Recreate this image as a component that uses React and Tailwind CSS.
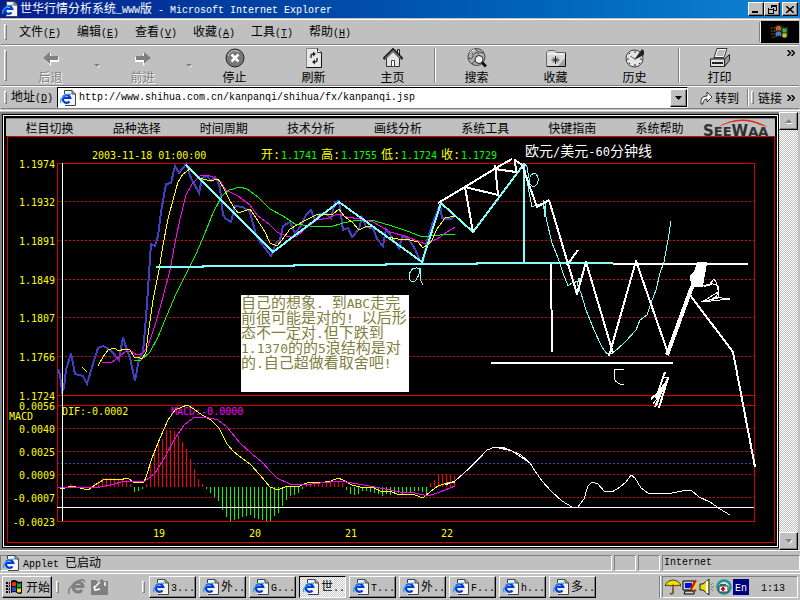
import React, { useState } from 'react';

const raised = 'border border-t-white border-l-white border-b-black border-r-black shadow-[inset_-1px_-1px_0_#808080]';

const menus = [
  ['文件', 'F'],
  ['编辑', 'E'],
  ['查看', 'V'],
  ['收藏', 'A'],
  ['工具', 'T'],
  ['帮助', 'H'],
];

const appletMenus = ['栏目切换', '品种选择', '时间周期', '技术分析', '画线分析', '系统工具', '快键指南', '系统帮助'];

const tasks = ['3...', '外..', 'G...', '世..', 'T...', '外..', 'F...', 'h...', '多..'];

const priceLabels = [
  ['1.1974', 163],
  ['1.1932', 201],
  ['1.1891', 240],
  ['1.1849', 279],
  ['1.1807', 317],
  ['1.1766', 356],
  ['1.1724', 395],
  ['0.0056', 405],
  ['0.0040', 428],
  ['0.0025', 451],
  ['0.0009', 474],
  ['-0.0007', 497],
  ['-0.0023', 521],
];

const quotes = [
  ['开:', '1.1741', 261],
  ['高:', '1.1755', 321],
  ['低:', '1.1724', 381],
  ['收:', '1.1729', 441],
];

const price =
  '58,369 60,375 62,391 64,388 66,370 71,353 75,374 79,375 83,376 87,384 92,367 98,348 103,346 107,348 112,352 119,360 123,337 126,347 130,358 135,381 139,359 143,352 146,318 149,274 151,244 155,246 158,236 161,212 166,184 171,183 175,166 179,173 186,164 191,178 199,193 202,178 207,176 211,181 215,177 218,182 220,188 223,215 226,219 231,222 235,206 243,207 250,212 256,235 261,243 265,248 271,256 276,243 280,240 283,226 290,222 295,233 301,226 306,215 311,210 315,220 320,214 326,214 331,218 335,202 339,201 343,230 348,228 352,237 359,229 362,217 366,227 373,228 377,239 383,246 386,229 392,237 399,248 402,237 408,238 415,249 420,261 423,262 427,241 433,222 440,205 442,218 447,219 451,219 455,215';
const maFast =
  '98,366 103,357 108,350 114,348 119,351 124,349 130,350 134,357 138,357 142,359 146,352 148,335 153,300 159,270 163,245 168,219 173,200 178,182 183,174 190,169 200,178 210,181 218,179 223,187 228,197 233,206 238,213 250,209 256,218 265,232 270,243 277,246 282,240 290,229 297,225 306,220 318,214 327,214 332,215 339,209 345,217 352,222 359,230 365,227 372,226 380,232 387,237 398,239 410,240 418,242 423,248 431,242 437,229 445,218 455,216';
const maMid =
  '102,363 112,362 119,357 126,351 131,351 137,355 143,353 148,346 156,322 163,297 170,270 175,243 180,219 186,195 192,184 200,176 208,175 215,178 220,181 226,190 238,196 250,205 257,215 270,225 277,232 286,236 297,236 305,229 317,220 329,218 337,214 347,217 360,219 373,222 380,226 390,232 405,236 415,240 425,244 437,239 447,232 455,227';
const maSlow =
  '134,361 141,360 150,352 158,337 167,315 176,294 188,270 196,254 205,233 213,213 222,196 229,190 240,187 247,189 258,197 270,209 283,216 295,224 310,226 330,227 343,223 358,220 375,221 392,226 410,232 422,237 440,235 455,234';
const dif =
  '60,489 65,488 72,486 80,488 88,490 95,485 103,480 112,479 119,480 128,478 134,483 144,482 146,477 152,458 160,438 168,420 175,410 187,405 194,409 202,415 211,420 219,428 227,444 234,452 250,464 260,475 270,487 278,490 287,486 300,486 309,482 325,482 331,481 338,478 343,480 352,485 360,487 372,487 382,492 390,491 399,495 407,494 415,495 423,498 430,492 438,486 447,483 455,482';
const dea =
  '58,488 80,487 95,488 110,485 125,481 145,481 155,473 165,457 174,440 184,425 193,418 205,417 218,420 227,427 240,443 252,454 262,462 270,471 277,478 290,484 305,485 320,483 340,481 358,484 375,487 400,492 415,493 428,496 440,492 455,486';

// one bar every 4 units starting at x = 70, positive is above the zero line
const bars = [
  3, 1, 1, 0, 0, 1, 4, 6, 9, 9, 9, 9, 8, 7, 7, 3, -5, -4, -2, 3, 26, 37, 43, 48, 57, 57, 56, 51, 45, 38, 28, 18, 8, 3,
  -2, -6, -10, -14, -23, -30, -34, -33, -32, -30, -29, -28, -31, -32, -33, -34, -34, -29, -26, -19, -13, -9, -8, -6, -2,
  2, 4, 4, 4, 3, 5, 5, 4, 5, 4, -3, -7, -8, -7, -4, -4, -5, -6, -7, -9, -7, -8, -6, -6, -8, -6, -5, -4, -4, -5, -8, 4,
  7, 13, 13, 13, 12, 11,
];

const forecast =
  '445,485 455,481 463,474 475,463 487,450 495,447 502,447 512,451 521,455 530,463 535,471 542,481 552,492 562,501 572,507 578,507 584,499 588,486 592,482 598,484 604,491 612,492 620,487 626,482 631,475 635,478 641,488 648,493 672,493 682,491 691,490 699,497 710,502 720,509 730,515';

const noteLines = [
  [['自己的想象', 0], ['. ', 1], ['到', 0], ['ABC', 1], ['走完', 0]],
  [['前很可能是对的', 0], ['! ', 1], ['以后形', 0]],
  [['态不一定对', 0], ['.', 1], ['但下跌到', 0]],
  [['1.1370', 1], ['的的', 0], ['5', 1], ['浪结构是对', 0]],
  [['的', 0], ['.', 1], ['自己超做看取舍吧', 0], ['!', 1]],
];

const En = ({ children }) => <span className="font-['Liberation_Mono',monospace] text-[10px]">{children}</span>;

const Grip = () => <span className="w-[3px] self-stretch my-1 border border-t-white border-l-white border-b-[#808080] border-r-[#808080]" />;

const Divider = () => <span className="w-[2px] self-stretch my-[2px] border-l border-l-[#808080] bg-white" />;

const Chevron = () => (
  <svg viewBox="0 0 8 6" className="w-2 h-[6px]">
    <path d="M.5 0L3.500 3L.5 6M4.500 0L7.500 3L4.500 6" fill="none" stroke="#000" strokeWidth="1.500" />
  </svg>
);

const IePage = () => (
  <svg viewBox="0 0 16 16" className="w-4 h-4 shrink-0">
    <path d="M4.500 .5h7.500l3.500 3.500v11.500h-11z" fill="#f4f4f4" />
    <path d="M4.500 4V.5H12M5 15.500h10.500V4" fill="none" stroke="#444" />
    <path d="M12 .5V4h3.500z" fill="#ccc" stroke="#444" />
    <path d="M9.500 11.500a3.800 3.800 0 1 1 .8-3.500H3.500" fill="none" stroke="#0038d8" strokeWidth="2.200" />
    <path d="M1 13C-1 9 6 3 11 4.500" fill="none" stroke="#28a0e8" strokeWidth="1.200" />
  </svg>
);

const WinFlag = () => (
  <svg viewBox="0 0 18 16" className="w-[18px] h-4 shrink-0">
    <path d="M6 2q3-2 6 0t5 0v12q-2 2-5 0t-6 0z" fill="#000" />
    <path d="M7 3.500q2-1 4 0v4q-2-1-4 0z" fill="#f03010" />
    <path d="M12 4q2 1 4 0v4q-2 1-4 0z" fill="#10b020" />
    <path d="M7 8.500q2-1 4 0v4q-2-1-4 0z" fill="#2050e0" />
    <path d="M12 9q2 1 4 0v4q-2 1-4 0z" fill="#f0e010" />
    <path d="M1 4h2M4 4h1M1 7h2M4 7h1M1 10h2M4 10h1M1 13h2M4 13h1" stroke="#000" strokeWidth="2" />
    <path d="M3 5h2M3 8h2" stroke="#f03010" />
    <path d="M3 11h2" stroke="#2050e0" />
  </svg>
);

const Throbber = () => (
  <svg viewBox="0 0 22 18" className="w-[22px] h-[18px]">
    <path d="M2 5h4M2 8h4M2 11h4M3 14h3" stroke="#803828" strokeWidth="1.500" strokeDasharray="1.500 1" />
    <path d="M6 3q4-3 7 0t6 0v11q-3 2-6 0t-7 1z" fill="#183018" />
    <path d="M7 4q3-2 5 0v4q-2-2-5 0z" fill="#d05838" />
    <path d="M13.500 5q2 1 4 0v4q-2 1-4 0z" fill="#40a850" />
    <path d="M7 9.500q3-2 5 0v4q-2-2-5 0z" fill="#4878c8" />
    <path d="M13.500 10q2 1 4 0v4q-2 1-4 0z" fill="#d8c020" />
  </svg>
);

const Arrow = ({ flip }) => (
  <svg viewBox="0 0 20 20" className="w-5 h-5">
    <g transform={flip ? 'translate(20 0) scale(-1 1)' : undefined}>
      <path d="M3 11l7-6v4h8v5h-8v4z" fill="#fff" />
      <path d="M2 10l7-6v4h8v4H9v4z" fill="#808080" />
    </g>
  </svg>
);

const StopIcon = () => (
  <svg viewBox="0 0 20 20" className="w-5 h-5">
    <circle cx="10" cy="10" r="9" fill="#777" stroke="#222" />
    <path d="M3 8a7 7 0 0 1 11-4" fill="none" stroke="#ccc" />
    <path d="M6.500 6.500l7 7M13.500 6.500l-7 7" stroke="#fff" strokeWidth="2.500" />
  </svg>
);

const RefreshIcon = () => (
  <svg viewBox="0 0 20 20" className="w-5 h-5">
    <path d="M2.500 .5h11l4 4v15h-15z" fill="#e8e8e8" stroke="#888" />
    <path d="M13.500 .5l4 4v15h-15" fill="none" stroke="#111" />
    <path d="M13.500 .5v4h4" fill="#fff" stroke="#333" />
    <path d="M7 10V7.500Q7 6 9.500 6M13 10v2.500Q13 14 10.500 14" fill="none" stroke="#222" strokeWidth="1.300" />
    <path d="M9 3.500L12 6L9 8.500zM11 11.500L8 14l3 2.500z" fill="#222" />
  </svg>
);

const HomeIcon = () => (
  <svg viewBox="0 0 20 20" className="w-5 h-5">
    <path d="M14.500 1.500h2v6h-2z" fill="#ddd" stroke="#222" />
    <path d="M3.500 10v8.500h13V10L10 3.500z" fill="#e4e4e4" stroke="#333" />
    <path d="M.5 11L10 1.500l9.500 9.500" fill="none" stroke="#111" strokeWidth="2.500" />
    <path d="M2 10.500L10 2.500l8 8" fill="none" stroke="#bbb" />
    <path d="M8.500 12.500h3v6h-3z" fill="#fff" stroke="#444" />
  </svg>
);

const SearchIcon = () => (
  <svg viewBox="0 0 20 20" className="w-5 h-5">
    <circle cx="9.500" cy="9" r="8.500" fill="#b0b0b0" stroke="#444" />
    <path d="M3 4q4 1 3 5-2 3-5 1M8 1q3 4 9 4M5 16q2-3 3-3M7 6q3-3 5 0" fill="none" stroke="#444" />
    <path d="M3 5q2-3 5-3.500" fill="none" stroke="#fff" />
    <path d="M15 14.500l4 4" stroke="#111" strokeWidth="3" />
    <circle cx="12" cy="11.500" r="4" fill="#eee" stroke="#222" />
  </svg>
);

const FavIcon = () => (
  <svg viewBox="0 0 20 20" className="w-5 h-5">
    <path d="M.5 18.500V4.500l2-2h6l2 2h9v14z" fill="#d8d8d8" stroke="#666" />
    <path d="M1 18.500h18.500V5" fill="none" stroke="#111" />
    <path d="M12 18l7-8v8z" fill="#a0a0a0" />
    <path d="M1 6h18" stroke="#fff" />
    <path d="M9.500 8v8M5.500 12h8M7 9.500l5 5M12 9.500l-5 5" stroke="#222" />
  </svg>
);

const HistoryIcon = () => (
  <svg viewBox="0 0 20 20" className="w-5 h-5">
    <circle cx="9.500" cy="10.500" r="8.500" fill="#e4e4e4" stroke="#333" />
    <path d="M10 3v2M10 16v2M2 11h2M15 11h2M4 5l1 1M15 16l-1-1M4 16l1-1" stroke="#222" />
    <path d="M9 12l8-11 2 2v4z" fill="#222" />
    <path d="M10 11l-5-3" stroke="#666" />
  </svg>
);

const PrintIcon = () => (
  <svg viewBox="0 0 20 20" className="w-5 h-5">
    <path d="M7 .5h10l-3 9H4z" fill="#fff" stroke="#333" />
    <path d="M8 3h7M7 5h7M6.500 7h7" stroke="#777" />
    <path d="M.5 11h14l5-4.500v6l-5 6h-14z" fill="#999" stroke="#222" />
    <path d="M.5 11h14v7.500H.5z" fill="#e4e4e4" stroke="#222" />
    <path d="M2 15h11" stroke="#222" strokeWidth="2" />
  </svg>
);

const ToolButton = ({ icon, label, disabled }) => (
  <button
    disabled={disabled}
    className="w-[79px] flex flex-col items-center gap-[2px] text-black disabled:text-[#808080] disabled:[text-shadow:1px_1px_0_#fff]"
  >
    {icon}
    <span>{label}</span>
  </button>
);

const Drop = ({ label }) => (
  <button aria-label={label} className="w-[13px] h-5 flex items-center justify-center" disabled>
    <svg viewBox="0 0 6 4" className="w-[6px] h-1">
      <path d="M1 1h5L4 4z" fill="#fff" />
      <path d="M0 0h6L3 3z" fill="#808080" />
    </svg>
  </button>
);

const SeeWaa = () => (
  <svg viewBox="0 0 72 18" className="w-[72px] h-[18px] shrink-0 overflow-visible">
    <path d="M15 8Q38-7 65 8L57 6Q38-3 15 8z" fill="#e82818" />
    <text x="0" y="17" fill="#303030" fontSize="15" fontWeight="700" fontFamily="DejaVu Sans, sans-serif">
      S<tspan fontSize="13">EE</tspan>W<tspan fontSize="13">AA</tspan>
    </text>
  </svg>
);

const Chart = () => (
  <svg
    viewBox="6 136 769 407"
    className="block w-full flex-1 bg-black font-['DejaVu_Sans_Mono','Noto_Sans_CJK_SC',monospace]"
    fontSize="10"
    role="img"
    aria-label="欧元/美元-60分钟线"
  >
    <g shapeRendering="crispEdges" fill="none" stroke="#d80000">
      <path d="M7.500 136.500H774.500V542.500H7.500z" />
      <path d="M57.500 163.500H754.500V521.500H57.500z" />
      <path d="M57 395.500H754M57 405.500H754" />
      <path
        d="M57 201.500H754M57 240.500H754M57 279.500H754M57 317.500H754M57 356.500H754M57 428.500H754M57 451.500H754M57 474.500H754M57 497.500H754"
        strokeDasharray="2 2"
      />
      <path d="M57 463.500H754" stroke="#4040c0" strokeDasharray="2 2" />
    </g>

    <g shapeRendering="crispEdges">
      {bars.map((v, i) => (
        <rect
          key={i}
          x={70 + i * 4}
          y={v > 0 ? 487 - v : 487}
          width="1"
          height={Math.abs(v)}
          fill={v > 0 ? '#ff0000' : '#00ff00'}
        />
      ))}
    </g>

    <g fill="#ffff00">
      {priceLabels.map(([label, y]) => (
        <text key={label} x="55" y={y + 5} textAnchor="end">
          {label}
        </text>
      ))}
      <text x="9" y="420">MACD</text>
      <text x="62" y="415">DIF:-0.0002</text>
      <text x="171" y="415" fill="#ff00ff">MACD:-0.0000</text>
      <text x="92" y="159">2003-11-18 01:00:00</text>
      {quotes.map(([label, value, x]) => (
        <text key={label} x={x} y="159">
          <tspan fontSize="12">{label}</tspan>
          <tspan x={x + 20} fill="#00ff00">{value}</tspan>
        </text>
      ))}
      <text x="153" y="537">19</text>
      <text x="249" y="537">20</text>
      <text x="345" y="537">21</text>
      <text x="441" y="537">22</text>
    </g>
    <text x="525" y="156" fill="#fff" fontSize="14">
      欧元<tspan fontSize="12">/</tspan>美元<tspan fontSize="12">-60</tspan>分钟线
    </text>

    {/* price and averages */}
    <g shapeRendering="crispEdges" fill="none">
      <polyline points={price} stroke="#4040c0" strokeWidth="2" />
      <polyline points={maSlow} stroke="#00ff00" />
      <polyline points={maMid} stroke="#ff00ff" />
      <polyline points={maFast} stroke="#ffff00" />
      <path d="M82 367l5 5" stroke="#ffff00" />
      <polyline points={dif} stroke="#ffff00" />
      <polyline points={dea} stroke="#ff00ff" />
      <path d="M62.500 163V521M57 507.500H754" stroke="#fff" />
    </g>

    {/* hand drawn waves */}
    <g shapeRendering="crispEdges" fill="none" stroke="#80ffff" strokeLinejoin="round">
      <path d="M186 165L273 252L339 202L422 262L441 203L473 232L524 164V263" strokeWidth="2" />
      <path d="M156 267H203V266H294V265H386V264H477V263H613" strokeWidth="2" />
      <path d="M421 269Q411 265 409 276Q410 284 415 281Q419 277 420 269V279L423 285" />
      <path d="M524 163L527 167L530 184Q534 189 537 184Q540 178 536 174Q531 173 530 177" />
      <path d="M525 170L530 197L532 207L536 205L545 203V217L543 200L547 222L552 243L558 258L563 273L568 286L572 283L579 281V278L577 284L581 293L586 310L594 330L602 347L607 354L613 353L625 342L636 330L640 320L647 315L651 303L656 290L660 273L664 262L668 240L671 221" />
    </g>
    <g shapeRendering="crispEdges" fill="none" stroke="#fff" strokeWidth="2" strokeLinejoin="round">
      <path d="M438 203L465 187L496 168L512 159M465 187L473 232M465 187L498 195L495 165M495 169L516 172L515 160L522 165L537 207L549 200" />
      <path d="M549 200L577 294L586 262L613 353M567 265L578 250M609 356L636 261L668 353" />
      <path d="M667 355L690 292L696 278" strokeWidth="4" />
      <path d="M690 295L733 352L755 467" />
      <path d="M551 264L552 352M491 363H673M613 264H748" />
      <path d="M698 263H706L702 286H692L691 276L695 272z" fill="#fff" />
      <path d="M702 286L709 285L714 279L711 283L718 286L719 292L715 298L709 300L701 302L730 299L713 297" strokeWidth="1" />
      <path d="M713 279Q719 282 718 298L702 302L718 292" strokeWidth="1" />
      <path d="M704 286L712 284" strokeWidth="2" />
      <path d="M624 369H615L614 378Q616 384 624 385" strokeWidth="1" />
      <path d="M665 372L656 398M668 378L659 408M661 382L657 405M665 384L655 407M651 399L660 391L655 397" />
      <path d="M662 378L669 377L660 390L667 384L653 404" strokeWidth="1" />
      <polyline points={forecast} strokeWidth="1" />
      <path d="M463 474L487 450L495 447L512 451L530 463" strokeWidth="1" />
    </g>

    <rect x="241" y="295" width="168" height="97" fill="#fff" />
    <g fill="#80803c" fontSize="15">
      {noteLines.map((line, i) => (
        <text key={i} x="241" y={308 + i * 15} className="whitespace-pre">
          {line.map(([part, latin], j) => (
            <tspan key={j} fontSize={latin ? 13 : 15}>{part}</tspan>
          ))}
        </text>
      ))}
    </g>
  </svg>
);

const ScrollArrow = ({ down }) => (
  <button aria-label={down ? '向下滚动' : '向上滚动'} className={`h-[18px] flex items-center justify-center bg-[#c0c0c0] ${raised}`}>
    <svg viewBox="0 0 8 5" className="w-2 h-[5px]">
      <path d={down ? 'M1 1h7L5 5z' : 'M1 5h7L5 1z'} fill="#fff" />
      <path d={down ? 'M0 0h7L4 4z' : 'M0 4h7L4 0z'} fill="#808080" />
    </svg>
  </button>
);

const Tray = () => (
  <>
    <svg viewBox="0 0 16 16" className="w-4 h-4">
      <path d="M0 7q1-5 8-6 7 1 8 6l-3-1-2 1-3-1-3 1-2-1z" fill="#f0e000" stroke="#444400" />
      <path d="M8 6v8q-1 2-3 0" fill="none" stroke="#804000" strokeWidth="1.500" />
    </svg>
    <svg viewBox="0 0 16 16" className="w-4 h-4">
      <path d="M1 2h11v9H1zM3 12h9v3H2z" fill="#ccc" stroke="#000" />
      <path d="M3 4h7v5H3z" fill="#0010d0" />
      <path d="M14 1L9 10M14 12l-6-4" stroke="#e01010" strokeWidth="2" />
      <path d="M11 11l4-7" stroke="#f0e000" strokeWidth="2" />
    </svg>
    <svg viewBox="0 0 16 16" className="w-4 h-4">
      <path d="M1 5h3l6-5v16l-6-5H1z" fill="#e8e000" stroke="#222" />
      <path d="M8 2v12" stroke="#fff" strokeWidth="2" />
      <path d="M12 6l2-2M12 8h3M12 10l2 2" stroke="#777" />
    </svg>
    <svg viewBox="0 0 16 16" className="w-4 h-4">
      <circle cx="8" cy="8" r="6.500" fill="#ddd" stroke="#209090" strokeWidth="2.500" />
      <path d="M3 7h9v6H3z" fill="#fff" stroke="#333" />
      <path d="M4 5h6v2H4z" fill="#207070" />
      <path d="M7 8v4M5 10h4" stroke="#e01010" strokeWidth="2" />
    </svg>
  </>
);

const App = () => {
  const [url, setUrl] = useState('http://www.shihua.com.cn/kanpanqi/shihua/fx/kanpanqi.jsp');
  const [active, setActive] = useState(3);

  return (
    <div className="min-h-screen flex flex-col bg-[#c0c0c0] text-black text-xs leading-[14px] font-['Noto_Sans_CJK_SC',sans-serif] whitespace-nowrap overflow-hidden">
      {/* title bar */}
      <header className="h-[18px] flex items-center pl-[2px] pr-[2px] bg-linear-to-r from-[#081c8c] to-[#1084d0] text-white">
        <IePage />
        <h1 className="flex-1 pl-[2px] whitespace-pre">
          世华行情分析系统<En>_WWW</En>版<En> - Microsoft Internet Explorer</En>
        </h1>
        <button aria-label="最小化" className={`w-4 h-[14px] bg-[#c0c0c0] flex items-end pl-[3px] pb-[2px] ${raised}`}>
          <span className="w-[6px] h-[2px] bg-black" />
        </button>
        <button aria-label="还原" className={`w-4 h-[14px] mr-[2px] bg-[#c0c0c0] flex items-center justify-center ${raised}`}>
          <svg viewBox="0 0 9 9" className="w-[9px] h-[9px]" shapeRendering="crispEdges">
            <path d="M3 1h5M3.500 0v3M8.500 0v6M6 5.500h3M0 4h6M.500 3v6M5.500 3v6M0 8.500h6" stroke="#000" fill="none" />
            <path d="M3 1h6" stroke="#000" strokeWidth="2" />
          </svg>
        </button>
        <button aria-label="关闭" className={`w-4 h-[14px] bg-[#c0c0c0] flex items-center justify-center ${raised}`}>
          <svg viewBox="0 0 8 7" className="w-2 h-[7px]">
            <path d="M0 0l8 7M8 0L0 7" stroke="#000" strokeWidth="1.500" />
          </svg>
        </button>
      </header>

      {/* menu */}
      <div className="h-[26px] mt-px mx-px flex items-stretch border-t border-t-white border-b border-b-[#808080]">
        <div className="flex-1 flex items-center pl-[3px]">
          <Grip />
          <nav className="flex pl-3">
            {menus.map(([label, key]) => (
              <button key={key} className="w-[58px] text-left">
                {label}
                <En>(<u>{key}</u>)</En>
              </button>
            ))}
          </nav>
        </div>
        <Divider />
        <div className="w-[38px] my-px flex items-center justify-center bg-black">
          <Throbber />
        </div>
      </div>

      {/* toolbar */}
      <div className="h-[41px] mx-px flex items-center border-t border-t-white border-b border-b-[#808080] pl-[3px]">
        <Grip />
        <div className="flex items-center pl-1 pr-[2px]">
          <ToolButton icon={<Arrow />} label="后退" disabled />
          <Drop label="后退列表" />
          <ToolButton icon={<Arrow flip />} label="前进" disabled />
          <Drop label="前进列表" />
          <ToolButton icon={<StopIcon />} label="停止" />
          <ToolButton icon={<RefreshIcon />} label="刷新" />
          <ToolButton icon={<HomeIcon />} label="主页" />
        </div>
        <Divider />
        <div className="flex items-center pl-px pr-1">
          <ToolButton icon={<SearchIcon />} label="搜索" />
          <ToolButton icon={<FavIcon />} label="收藏" />
          <ToolButton icon={<HistoryIcon />} label="历史" />
        </div>
        <Divider />
        <ToolButton icon={<PrintIcon />} label="打印" />
        <button aria-label="更多按钮" className="ml-auto pr-1 pt-1 self-start">
          <Chevron />
        </button>
      </div>

      {/* address bar */}
      <div className="h-[23px] mx-px flex items-center border-t border-t-white border-b border-b-[#808080] pl-[3px]">
        <Grip />
        <label htmlFor="address" className="w-[50px] pl-1">
          地址<En>(<u>D</u>)</En>
        </label>
        <div className="flex-1 h-[21px] flex items-center bg-white pl-[2px] border border-t-black border-l-black border-b-white border-r-white">
          <IePage />
          <input
            id="address"
            value={url}
            onChange={(e) => setUrl(e.target.value)}
            className="flex-1 min-w-0 pl-[3px] font-['Liberation_Mono',monospace] text-[10px] outline-none"
          />
          <button aria-label="打开地址列表" className={`w-[17px] h-[18px] bg-[#c0c0c0] flex items-center justify-center ${raised}`}>
            <svg viewBox="0 0 7 4" className="w-[7px] h-1">
              <path d="M0 0h7L3.500 4z" />
            </svg>
          </button>
        </div>
        <button className="w-[59px] pl-3 flex items-center">
          <svg viewBox="0 0 13 14" className="w-[13px] h-[14px]">
            <path d="M1 13Q0 5 7 5V1l5 5-5 5V8Q3 8 3 13z" fill="#fff" stroke="#333" />
          </svg>
          <span className="pl-[2px]">转到</span>
        </button>
        <Divider />
        <span className="w-[2px]" />
        <Grip />
        <button className="pl-1">链接</button>
        <button aria-label="更多链接" className="pl-[5px] pr-1">
          <Chevron />
        </button>
      </div>
      <div className="h-[2px] mb-px border-b border-b-white" />

      {/* page */}
      <main className="flex-1 flex">
        <div className="flex-1 min-w-0 flex flex-col border-2 border-[#808080] border-r-0 bg-black">
          <div className="flex-1 flex flex-col m-px border border-white p-[2px] pb-[3px]">
            <nav className="flex items-center h-[18px] bg-[#c0c0c0] border-t border-t-[#808080]">
              {appletMenus.map((m) => (
                <button key={m} className="flex-1 text-center">{m}</button>
              ))}
              <SeeWaa />
            </nav>
            <Chart />
          </div>
        </div>
        <div className="w-[19px] mr-[2px] flex flex-col bg-[repeating-conic-gradient(#ffffff_0_25%,#bfbfbf_0_50%)] bg-[size:2px_2px]">
          <ScrollArrow />
          <div className="flex-1" />
          <ScrollArrow down />
        </div>
      </main>

      {/* status bar */}
      <footer className="h-[23px] pt-1 pb-[2px] flex gap-[2px] border-t border-t-white">
        <div className="flex-1 flex items-center pl-[2px] border border-t-[#808080] border-l-[#808080] border-b-white border-r-white">
          <IePage />
          <span className="pl-1 whitespace-pre"><En>Applet </En>已启动</span>
        </div>
        <div className="w-[22px] border border-t-[#808080] border-l-[#808080] border-b-white border-r-white" />
        <div className="w-[22px] border border-t-[#808080] border-l-[#808080] border-b-white border-r-white" />
        <div className="w-[138px] flex items-center pl-px border border-t-[#808080] border-l-[#808080] border-b-white border-r-white">
          <En>Internet</En>
        </div>
      </footer>

      {/* taskbar */}
      <div className="h-[27px] flex items-center pl-[2px] pr-[2px] border-t border-t-white">
        <button className={`w-[50px] h-[22px] flex items-center pl-[2px] gap-[3px] ${raised}`}>
          <WinFlag />
          开始
        </button>
        <div className="w-[97px] flex items-center h-5 pl-1 gap-[5px]">
          <Grip />
          <button aria-label="浏览器" className="pl-1">
            <svg viewBox="0 0 18 16" className="w-[18px] h-4">
              <path d="M14 11a5 5 0 1 1 1-3.500H5" fill="none" stroke="#808080" strokeWidth="3" />
              <path d="M1 15Q-1 10 7 4T17 3" fill="none" stroke="#808080" strokeWidth="1.500" />
            </svg>
          </button>
          <button aria-label="显示桌面">
            <svg viewBox="0 0 17 16" className="w-[17px] h-4">
              <path d="M0 1h5l2 2 4-3 2 2h4v14H0z" fill="#808080" />
              <path d="M3 9l6-6M3 7l1 4 5-1M14 3v4" stroke="#fff" fill="none" strokeWidth="1.500" />
            </svg>
          </button>
          <span className="ml-auto flex self-stretch pr-1">
            <Grip />
          </span>
        </div>
        <nav className="flex flex-1 gap-[3px]">
          {tasks.map((t, i) => (
            <button
              key={i}
              onClick={() => setActive(i)}
              className={`w-[47px] h-[22px] flex items-center pl-[3px] overflow-hidden ${
                i === active
                  ? 'border border-t-black border-l-black border-b-white border-r-white bg-[repeating-conic-gradient(#ffffff_0_25%,#c8c8c8_0_50%)] bg-[size:2px_2px]'
                  : raised
              }`}
            >
              <IePage />
              <span className="pl-[2px]">
                {t.charCodeAt(0) > 255 ? t[0] : <En>{t[0]}</En>}
                <En>{t.slice(1)}</En>
              </span>
            </button>
          ))}
        </nav>
        <Divider />
        <div className="w-[136px] h-[22px] ml-px flex items-center gap-px pl-[2px] border border-t-[#808080] border-l-[#808080] border-b-white border-r-white">
          <Tray />
          <span className="w-4 h-4 bg-[#000080] text-white text-center"><En>En</En></span>
          <time className="flex-1 text-right pr-3"><En>1:13</En></time>
        </div>
      </div>
    </div>
  );
};

export default App;
